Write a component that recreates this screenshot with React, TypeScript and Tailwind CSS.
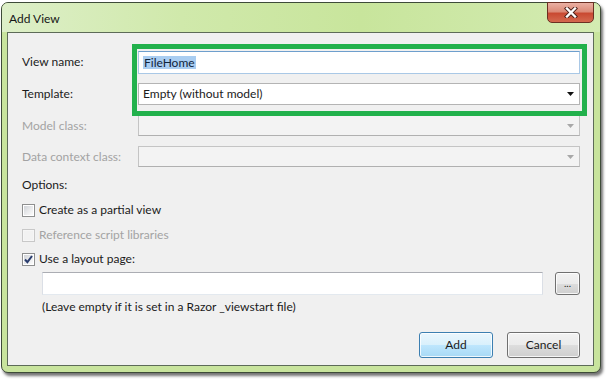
import React from 'react';

function Arrow({ disabled }: { disabled?: boolean }) {
  return (
    <svg width="7" height="4" viewBox="0 0 7 4" className="mr-[5px]">
      <path d="M0 0 L7 0 L3.5 4 Z" fill={disabled ? '#a8a8a8' : '#111'} />
    </svg>
  );
}

function Checkbox({ checked, disabled }: { checked?: boolean; disabled?: boolean }) {
  return (
    <div
      className={
        'w-[13px] h-[13px] border p-[1px] ' +
        (disabled ? 'border-[#c8c8c8] bg-[#f6f6f6]' : 'border-[#8e8f8f] bg-white')
      }
    >
      <div
        className={
          'w-full h-full relative ' +
          (disabled
            ? 'bg-[#f2f2f2]'
            : 'bg-[linear-gradient(135deg,#d0d3d8_0%,#e8e9eb_50%,#fbfbfb_100%)]')
        }
      >
        {checked && (
          <svg width="11" height="11" viewBox="0 0 11 11" className="absolute -left-[1px] -top-[1px]">
            <path d="M2 5.5 L4.4 8.2 L9 2" stroke="#2a3d6e" strokeWidth="2" fill="none" />
          </svg>
        )}
      </div>
    </div>
  );
}

function WinButton({ label, primary, w }: { label: string; primary?: boolean; w: string }) {
  return (
    <div
      className={
        w +
        ' h-[26px] rounded-[3px] border flex items-center justify-center shadow-[inset_0_0_0_1px_rgba(255,255,255,0.8)] ' +
        (primary
          ? 'border-[#3c7fb1] bg-[linear-gradient(180deg,#eaf6fd_0%,#d9f0fc_50%,#bee6fd_51%,#a7d9f5_100%)]'
          : 'border-[#707070] bg-[linear-gradient(180deg,#f2f2f2_0%,#ebebeb_50%,#dddddd_51%,#cfcfcf_100%)]')
      }
    >
      {label}
    </div>
  );
}

export default function App() {
  return (
    <div className="w-[612px] h-[379px] bg-white pl-[1px] pt-[2px] overflow-hidden font-['Lato',sans-serif] text-[12px] leading-[16px] text-[#1b1b1b]">
      <div className="w-[600px] h-[371px] rounded-[7px] border border-[#3e4b39] bg-[#c8e49d] shadow-[2px_3px_3px_rgba(0,0,0,0.55)] flex flex-col">
        {/* title bar */}
        <div className="h-[29px] flex items-start justify-between rounded-t-[6px] bg-[linear-gradient(90deg,#ddefc8_0%,#d0e9ab_30%,#c8e59c_60%,#d3ebb2_100%)]">
          <div className="pl-[7px] pt-[8px] text-[#161616]">Add View</div>
          <div className="mr-[6px] -mt-[1px] w-[47px] h-[21px] rounded-b-[5px] border border-[#6b2f22] bg-[linear-gradient(180deg,#eab0a3_0%,#dc8b78_45%,#c94a32_55%,#d4694f_100%)] flex items-center justify-center">
            <svg width="14" height="11" viewBox="0 0 14 11">
              <path d="M3 1.5 L11 9.5 M11 1.5 L3 9.5" stroke="#4a2018" strokeWidth="4.2" strokeLinecap="square" />
              <path d="M3 1.5 L11 9.5 M11 1.5 L3 9.5" stroke="#fff" strokeWidth="2.4" strokeLinecap="square" />
            </svg>
          </div>
        </div>

        {/* client area */}
        <div className="ml-[5px] mr-[6px] mb-[6px] h-[334px] border border-[#5d6b58] bg-[#f0f0f0] relative pl-[14px] pr-[13px] pt-[18px]">
          <div className="flex items-center h-[22px]">
            <div className="w-[116px]">View name:</div>
            <div className="flex-1 h-[23px] bg-white border border-[#a9c8e6] border-t-[#6e9fcd] flex items-center pl-[4px]">
              <span className="bg-[#a9cdf1] text-[#10243c] leading-[13px] px-[1px]">FileHome</span>
            </div>
          </div>

          <div className="flex items-center h-[22px] mt-[10px]">
            <div className="w-[116px]">Template:</div>
            <div className="flex-1 h-[22px] bg-white border border-[#b4b4b4] flex items-center justify-between pl-[4px]">
              <span>Empty (without model)</span>
              <Arrow />
            </div>
          </div>

          <div className="flex items-center h-[21px] mt-[10px]">
            <div className="w-[116px] text-[#a3a3a3]">Model class:</div>
            <div className="flex-1 h-[21px] bg-[#f3f3f3] border border-[#c4c4c4] border-b-[#b0b0b0] flex items-center justify-end">
              <Arrow disabled />
            </div>
          </div>

          <div className="flex items-center h-[21px] mt-[10px]">
            <div className="w-[116px] text-[#a3a3a3]">Data context class:</div>
            <div className="flex-1 h-[21px] bg-[#f3f3f3] border border-[#c4c4c4] border-b-[#b0b0b0] flex items-center justify-end">
              <Arrow disabled />
            </div>
          </div>

          <div className="mt-[10px]">Options:</div>

          <div className="flex items-center gap-[4px] mt-[9px]">
            <Checkbox />
            <span>Create as a partial view</span>
          </div>
          <div className="flex items-center gap-[4px] mt-[9px]">
            <Checkbox disabled />
            <span className="text-[#a3a3a3]">Reference script libraries</span>
          </div>
          <div className="flex items-center gap-[4px] mt-[8px]">
            <Checkbox checked />
            <span>Use a layout page:</span>
          </div>

          <div className="flex items-center mt-[5px] pl-[20px] gap-[12px]">
            <div className="flex-1 h-[23px] bg-white border border-[#dbdfe6] border-t-[#abadb3] border-b-[#e3e9ef]" />
            <div className="w-[25px] h-[23px] rounded-[3px] border border-[#707070] bg-[linear-gradient(180deg,#f2f2f2_0%,#ebebeb_50%,#dddddd_51%,#cfcfcf_100%)] shadow-[inset_0_0_0_1px_rgba(255,255,255,0.8)] flex items-center justify-center text-[10px] leading-[10px] pb-[2px]">
              ...
            </div>
          </div>

          <div className="mt-[4px] pl-[20px]">(Leave empty if it is set in a Razor _viewstart file)</div>

          <div className="flex justify-end gap-[14px] mt-[17px]">
            <WinButton label="Add" primary w="w-[74px]" />
            <WinButton label="Cancel" w="w-[73px]" />
          </div>

          {/* highlight annotation */}
          <div className="absolute left-[124px] top-[11px] w-[455px] h-[72px] border-[5px] border-[#22b14c] pointer-events-none" />
        </div>
      </div>
    </div>
  );
}
